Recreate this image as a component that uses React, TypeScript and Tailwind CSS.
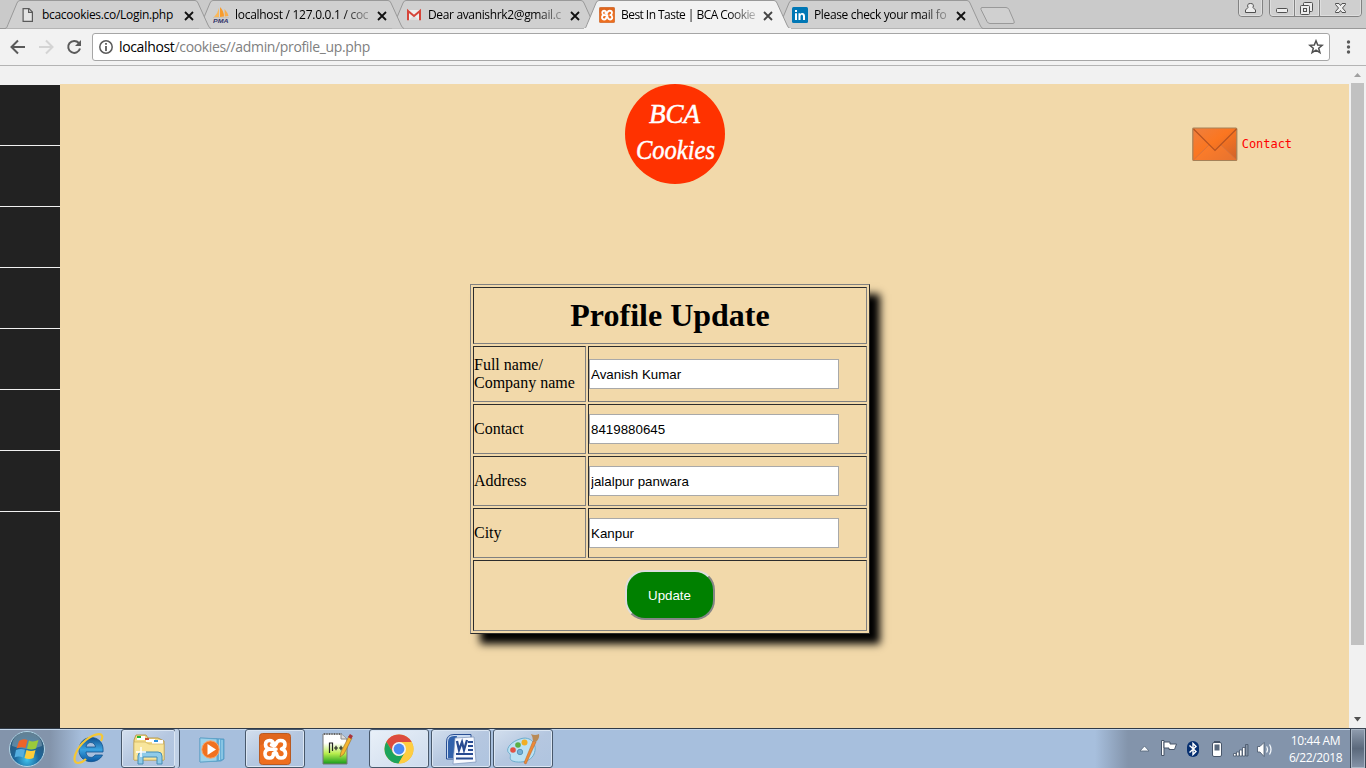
import type { ReactNode } from "react";

function PageIcon() {
  return (
    <svg width="16" height="16" viewBox="0 0 16 16" fill="#e4e4e4" stroke="#5a5a5a" strokeWidth="1.2">
      <path d="M3.100 1.6 H9 L12.4 5 V14.4 H3.100 Z" />
      <path d="M8.6 1.8 V5.4 H12.2" fill="none" />
    </svg>
  );
}

function PmaIcon() {
  return (
    <svg width="16" height="16" viewBox="0 0 16 16">
      <path d="M6 1 Q5 6 1 10 L6 10 Z" fill="#f9b85c" />
      <path d="M7 0 Q11 4 11 9.5 L7 10 Z" fill="#f89c2c" />
      <path d="M11.5 2 Q15 6 15.5 9 L11.8 9.6 Z" fill="#f9ad4a" />
      <path d="M0 10.6 H16" stroke="#c9b9a0" strokeWidth=".6" />
      <text x="0" y="15.8" fontFamily="Liberation Sans" fontSize="5.6" fontWeight="bold" fontStyle="italic" fill="#34366b" textLength="15.5" lengthAdjust="spacingAndGlyphs">PMA</text>
    </svg>
  );
}

function GmailIcon() {
  return (
    <svg width="16" height="16" viewBox="0 0 16 16">
      <path d="M1 3 H15 V13 H1 Z" fill="#eeeeee" />
      <path d="M3 13 L8 8.5 L13 13" fill="#dddddd" />
      <path d="M2 13.2 V4 L8 9 L14 4 V13.2" fill="none" stroke="#d6453a" strokeWidth="2" />
    </svg>
  );
}

function XamppIcon({ size }: { size: number }) {
  return (
    <svg width={size} height={size} viewBox="0 0 32 32">
      <rect x=".5" y=".5" width="31" height="31" rx="3" fill="#ee6e1e" stroke="#b85a22" />
      <path d="M1 1 H31 V10 Q16 7 1 12 Z" fill="#b9501c" opacity=".25" />
      <g fill="none" stroke="#fff" strokeWidth="3.600" strokeLinecap="round" strokeLinejoin="round">
        <path d="M12.500 12 Q15.500 13.500 17 11 Q18 7.500 21.500 7.500 Q26 7.500 26 11.500 Q26 15 22.500 16 Q26.500 17 26.500 20.500 Q26.500 25 22 25 Q18 25 17.500 20.500 Q16.500 18.500 14.500 20.500 Q14.500 25 10.500 25 Q6 25 6 20.500 Q6 17 10 16.300 H17" />
        <path d="M10 16 Q6.500 15 6.500 11.500 Q6.500 7.500 10.500 7.500 Q14 7.500 15 11.500" />
      </g>
    </svg>
  );
}

function LinkedInIcon() {
  return (
    <svg width="16" height="16" viewBox="0 0 16 16">
      <rect width="16" height="16" rx="1.5" fill="#0077b5" />
      <path d="M3 6.200 H5 V13 H3 Z M3 3 H5 V5 H3 Z M6.500 6.200 H8.400 V7.300 C9 5.700 13 5.200 13 9.200 V13 H11 V9.600 C11 7 8.500 7.300 8.500 9.600 V13 H6.500 Z" fill="#fff" />
    </svg>
  );
}

const tabs: { title: string; icon: ReactNode; active?: boolean; z: string; fade: boolean; track: string }[] = [
  { title: "bcacookies.co/Login.php", icon: <PageIcon />, z: "z-[5]", fade: false, track: "tracking-[-0.3px]" },
  { title: "localhost / 127.0.0.1 / coc", icon: <PmaIcon />, z: "z-[4]", fade: true, track: "tracking-[-0.28px]" },
  { title: "Dear avanishrk2@gmail.c", icon: <GmailIcon />, z: "z-[3]", fade: true, track: "tracking-[-0.35px]" },
  { title: "Best In Taste | BCA Cookie", icon: <XamppIcon size={16} />, active: true, z: "z-[6]", fade: true, track: "tracking-[-0.55px]" },
  { title: "Please check your mail fo", icon: <LinkedInIcon />, z: "z-[2]", fade: true, track: "tracking-[-0.35px]" },
];

function TabStrip() {
  return (
    <div className="relative flex h-[29px] shrink-0 border-b border-[#999] bg-[#cacaca] pl-[5px]">
      {tabs.map((t) => (
        <div key={t.title} className={`relative h-[29px] w-[193px] shrink-0 ${t.z}`}>
          <svg className="absolute left-0 top-0" width="208" height="29" viewBox="0 0 208 29">
            <path d="M0 28.5 C2 28 2 27 3 24.500 L12 3 Q13 .5 15 .5 H190 Q192 .5 193 3 L203 25 Q204.500 28.500 206 28.500" fill={t.active ? "#f2f2f2" : "#d0d0d0"} stroke="#999" />
            {t.active && <path d="M0 28.500 H207" stroke="#f2f2f2" />}
          </svg>
          <div className="relative flex h-[29px] items-center pl-[15px]">
            <span className="mt-px w-[22px] shrink-0">{t.icon}</span>
            <span className={`w-[134px] whitespace-nowrap text-[12px] leading-[18px] text-black ${t.track} ${t.fade ? "[mask-image:linear-gradient(to_right,black_108px,transparent_142px)]" : ""}`}>{t.title}</span>
            <svg className="ml-[8px] mt-[2px]" width="10" height="10" viewBox="0 0 10 10">
              <path d="M1 1 L9 9 M9 1 L1 9" stroke={t.active ? "#444" : "#111"} strokeWidth="1.800" />
            </svg>
          </div>
        </div>
      ))}
      <svg className="ml-[9px]" width="38" height="28" viewBox="0 0 38 28">
        <path d="M3 7.500 H27 Q29 7.500 30 9.500 L35 21 Q36 23.500 34 23.500 H11 Q9 23.500 8 21.500 L2 9.500 Q1.500 7.500 3 7.500 Z" fill="#d0d0d0" stroke="#999" />
      </svg>
      <svg className="ml-auto mr-[3px]" width="126" height="18" viewBox="0 0 126 18">
        <g fill="#cfcfcf" stroke="#828282">
          <path d="M1.500 -1 V13 Q1.500 16.500 5 16.500 H22 Q25.500 16.500 25.500 13 V-1" />
          <path d="M32.500 -1 V13 Q32.500 16.500 36 16.500 H121 Q124.500 16.500 124.500 13 V-1" />
          <path d="M57.500 0 V16 M82.500 0 V16" />
        </g>
        <g fill="none" stroke="#dedede">
          <path d="M2.500 0 V13 Q2.500 15.500 5 15.500 H22 Q24.500 15.500 24.500 13 V0 M33.500 0 V13 Q33.500 15.500 36 15.500 H56.500 V0 M58.500 0 V15.500 H81.500 V0 M83.500 0 V15.500 H121 Q123.500 15.500 123.500 13 V0" />
        </g>
        <g fill="#ededed" stroke="#505050">
          <path d="M11 7.500 Q9.500 3.500 13.500 3.500 Q17.500 3.500 16 7.500 L18.500 10 V12.500 H8.500 V10 Z" />
          <rect x="39.500" y="8.500" width="11" height="4" rx="1" />
          <rect x="66.500" y="2.500" width="9" height="9" rx="1" />
          <rect x="63.500" y="5.500" width="9" height="9" rx="1" />
          <rect x="66.500" y="8.500" width="3" height="3" />
          <path d="M98.500 3.500 H102 L103.500 5.500 L105 3.500 H108.500 V4.500 L105.500 8 L108.500 11.500 V12.500 H105 L103.500 10.500 L102 12.500 H98.500 V11.500 L101.500 8 L98.500 4.500 Z" />
        </g>
      </svg>
    </div>
  );
}

function Toolbar() {
  return (
    <div className="flex h-[37px] shrink-0 items-center border-b border-[#b4b4b4] bg-[#f2f2f2]">
      <svg width="92" height="36" viewBox="0 0 92 36" fill="none" strokeWidth="2">
        <path d="M25 18 H12 M18 11.500 L11.500 18 L18 24.500" stroke="#5a5a5a" />
        <path d="M39 18 H52 M46 11.500 L52.500 18 L46 24.500" stroke="#d4d4d4" />
        <path d="M78.800 14 A6 6 0 1 0 80 19.500" stroke="#5a5a5a" />
        <path d="M81 11 V17 H75 Z" fill="#5a5a5a" />
      </svg>
      <div className="flex h-[28px] w-[1238px] items-center rounded-[3px] border border-[#a6a6a6] bg-white">
        <svg className="ml-[6px] mr-[6px] shrink-0" width="14" height="14" viewBox="0 0 14 14">
          <circle cx="7" cy="7" r="6.200" fill="none" stroke="#5a5a5a" strokeWidth="1.500" />
          <path d="M7 3 V4.800 M7 6 V11" stroke="#5a5a5a" strokeWidth="1.800" />
        </svg>
        <span className="whitespace-nowrap text-[14px] leading-[20px] tracking-[-0.35px] text-[#808080]">
          <span className="text-black">localhost</span>/cookies//admin/profile_up.php
        </span>
        <svg className="ml-auto mr-[5px] shrink-0" width="16" height="16" viewBox="0 0 16 16">
          <path d="M8 1.800 L9.700 6 L14.200 6.300 L10.700 9.200 L11.900 13.700 L8 11.200 L4.100 13.700 L5.300 9.200 L1.800 6.300 L6.300 6 Z" fill="none" stroke="#505050" strokeWidth="1.500" />
        </svg>
      </div>
      <svg className="ml-[16px]" width="5" height="14" viewBox="0 0 5 14" fill="#5a5a5a">
        <circle cx="2.500" cy="2" r="1.700" />
        <circle cx="2.500" cy="7" r="1.700" />
        <circle cx="2.500" cy="12" r="1.700" />
      </svg>
    </div>
  );
}

function Envelope() {
  return (
    <svg width="46" height="35" viewBox="0 0 46 35">
      <defs>
        <linearGradient id="env" x1="0" y1="0" x2="1" y2="1">
          <stop offset="0" stopColor="#ee8040" />
          <stop offset=".45" stopColor="#fb7620" />
          <stop offset="1" stopColor="#cf622b" />
        </linearGradient>
      </defs>
      <rect x=".8" y="1" width="44" height="32.500" rx="1" fill="url(#env)" stroke="#a58158" strokeWidth="1.200" />
      <path d="M1.500 33 L17 18 L23 23.500 L29 18 L44.500 33 Z" fill="#fb8234" opacity=".5" />
      <path d="M1.500 33 L17 18 M44.500 33 L29 18" stroke="#d9743c" strokeWidth="1" />
      <path d="M1.500 2 L23 23.500 L44.500 2" fill="none" stroke="#b65320" strokeWidth="1.200" />
    </svg>
  );
}

const cell = "flex items-center border border-b-[#808080] border-l-[#2c2c2c] border-r-[#808080] border-t-[#2c2c2c]";

const fields = [
  { label: "Full name/ Company name", value: "Avanish Kumar" },
  { label: "Contact", value: "8419880645" },
  { label: "Address", value: "jalalpur panwara" },
  { label: "City", value: "Kanpur" },
];

function ProfileForm() {
  return (
    <div className="mt-[100px] grid h-[350px] w-[400px] shrink-0 grid-cols-[113px_279px] grid-rows-[57px_56px_50px_50px_50px_71px] gap-[2px] border border-b-[#2c2c2c] border-l-[#808080] border-r-[#2c2c2c] border-t-[#808080] bg-[#f2d9aa] p-[2px] font-['Liberation_Serif',serif] text-[16px] leading-[18px] text-black shadow-[10px_10px_8px_#000]">
      <div className={`${cell} col-span-2 justify-center`}>
        <h1 className="pl-px text-[32px] font-bold leading-[37px]">Profile Update</h1>
      </div>
      {fields.map((f) => (
        <div key={f.label} className="contents">
          <label className={`${cell} pl-[0.5px]`}>{f.label}</label>
          <div className={cell}>
            <input defaultValue={f.value} className="h-[30px] w-[250px] border border-[#a9a9a9] bg-white px-[1.5px] font-['Liberation_Sans',sans-serif] text-[13.333px] text-black" />
          </div>
        </div>
      ))}
      <div className={`${cell} col-span-2 justify-center`}>
        <button className="-mt-px h-[50px] w-[90px] rounded-[20px] border-2 border-b-[#868686] border-l-[#dddddd] border-r-[#868686] border-t-[#dddddd] bg-[#008000] pt-px font-['Liberation_Sans',sans-serif] text-[13.333px] text-white">
          Update
        </button>
      </div>
    </div>
  );
}

function Page() {
  return (
    <div className="flex min-h-0 flex-1 bg-[#f1f1f1]">
      <div className="mt-[18px] flex flex-1 bg-[#f2d9aa]">
        <nav className="w-[60px] shrink-0 border-t border-[#f1f1f1] bg-[#222]">
          {[0, 1, 2, 3, 4, 5, 6].map((i) => (
            <div key={i} className="h-[61px] border-b border-[#f1f1f1]" />
          ))}
        </nav>
        <main className="grid flex-1 grid-cols-[1fr_400px_1fr]">
          <div />
          <div className="-ml-[35px] flex flex-col">
            <svg className="ml-[155px] shrink-0" width="100" height="100" viewBox="0 0 100 100">
              <circle cx="50" cy="50" r="50" fill="#ff3200" />
              <g fill="#fff" stroke="#fff" strokeWidth=".5" fontFamily="Liberation Serif, serif" fontStyle="italic">
                <text x="24" y="39" fontSize="27" textLength="51" lengthAdjust="spacingAndGlyphs">BCA</text>
                <text x="11" y="75" fontSize="28" textLength="79" lengthAdjust="spacingAndGlyphs">Cookies</text>
              </g>
            </svg>
            <ProfileForm />
          </div>
          <a className="mr-[57px] mt-[42px] flex h-[36px] items-center justify-end gap-[4px] font-['DejaVu_Sans_Mono',monospace] text-[12px] tracking-[-0.05px] text-[#f00]">
            <Envelope />
            Contact
          </a>
        </main>
      </div>
      <div className="flex w-[17px] shrink-0 flex-col items-center bg-[#f1f1f1]">
        <svg className="h-[17px] shrink-0" width="17" height="17"><path d="M5 11 L8.500 7 L12 11 Z" fill="#a0a0a0" /></svg>
        <div className="h-[562px] w-[13px] bg-[#c1c1c1]" />
        <svg className="mt-auto" width="17" height="17"><path d="M5 6 L8.500 10.500 L12 6 Z" fill="#505050" /></svg>
      </div>
    </div>
  );
}

function Orb() {
  return (
    <svg width="38" height="38" viewBox="0 0 38 38">
      <defs>
        <radialGradient id="orb" cx=".5" cy=".8" r=".75">
          <stop offset="0" stopColor="#41c4ee" />
          <stop offset=".45" stopColor="#1c679d" />
          <stop offset="1" stopColor="#33566f" />
        </radialGradient>
      </defs>
      <circle cx="19" cy="19" r="17.500" fill="url(#orb)" stroke="#b2d5e6" strokeWidth="1" />
      <path d="M4 16 A15 14 0 0 1 34 16 Q19 22 4 16" fill="#d2e4ec" opacity=".3" />
      <path d="M11 11 Q15 8 19.500 10 L17.500 18 Q13 16.500 8.500 18.500 Z" fill="#ed6428" />
      <path d="M21 10.500 Q25 12.500 30.500 10 L28 18.500 Q23 20.500 19 18.500 Z" fill="#9aca3a" />
      <path d="M8 20 Q13 18 17 19.800 L15 27.500 Q11 25.500 6.500 27.500 Z" fill="#54aee0" />
      <path d="M18.500 20 Q23 22 27.500 20 L25.500 28 Q21 30 16.500 28 Z" fill="#fdcd3b" />
    </svg>
  );
}

function IeIcon() {
  return (
    <svg width="34" height="34" viewBox="0 0 34 34">
      <defs><linearGradient id="ie" x1="0" y1="0" x2="0" y2="1"><stop offset="0" stopColor="#11508f" /><stop offset=".5" stopColor="#3ba3e0" /><stop offset="1" stopColor="#0957a2" /></linearGradient></defs>
      <path d="M31 20 H14 C14 26 21 27 23 23 H30.500 C26 33 7 32 7 18 C7 1 33 1 31 20 Z M14 15 H23.500 C23 9 14.500 9 14 15 Z" fill="url(#ie)" fillRule="evenodd" stroke="#12528e" strokeWidth=".8" />
      <path d="M29 9 C34 -1 23 1 14 8 C3 17 -1 31 6 31 C9 31 12 29 14 27" fill="none" stroke="#f5c735" strokeWidth="2.200" />
    </svg>
  );
}

function FolderIcon() {
  return (
    <svg width="34" height="34" viewBox="0 0 34 34">
      <path d="M2 8 L4 3 H14 L16 6 H26 L32 9 V28 H2 Z" fill="#f4dc87" stroke="#b89a4e" />
      <path d="M5 4 H13 V8 H5 Z M14 7 H23 V10 H14 Z M20 8 H31 V12 H20 Z" fill="#fff" />
      <path d="M5 4 H9 V6 H5 Z" fill="#20b632" /><path d="M13 6 H17 V8 H13 Z" fill="#d04b31" /><path d="M22 8 H26 V10 H22 Z" fill="#2c91dc" />
      <path d="M2 10 H13 L17 12 H32 V28 H2 Z" fill="#f8e59b" stroke="#cfb15f" strokeWidth=".7" />
      <path d="M6 32 V24 Q6 20 10 20 H26 Q30 20 30 24 V32 H25 V25 H11 V32 Z" fill="#8fcbe9" stroke="#458cb4" />
      <path d="M9 15 V25 M4 20 H14" stroke="#fff" strokeWidth="1.500" />
    </svg>
  );
}

function PlayerIcon() {
  return (
    <svg width="32" height="32" viewBox="0 0 32 32">
      <path d="M3 5 L27 6 V26 L24 28 L3 29 Z" fill="#67aed6" stroke="#4892bd" strokeWidth=".7" />
      <path d="M3 5 L20 6 V28 L3 29 Z" fill="#9ed2ea" stroke="#579fc4" strokeWidth=".7" />
      <path d="M22.500 6.500 V27 M25 7 V26" stroke="#a9dcf1" />
      <circle cx="13.500" cy="16.500" r="8.700" fill="#f1711f" stroke="#f7a76d" />
      <path d="M10.500 11 L19 16.500 L10.500 22 Z" fill="#fff" />
    </svg>
  );
}

function NotepadIcon() {
  return (
    <svg width="32" height="34" viewBox="0 0 32 34">
      <defs><linearGradient id="np" x1="0" y1="0" x2="0" y2="1"><stop offset=".3" stopColor="#fff" /><stop offset=".65" stopColor="#b8ed4e" /><stop offset="1" stopColor="#149b1b" /></linearGradient></defs>
      <path d="M2 2 H20 L26 7 V32 H2 Z" fill="url(#np)" stroke="#777" />
      <path d="M3 2 H21" stroke="#666" strokeWidth="2" strokeDasharray="1 1.500" />
      <path d="M20 2 V7 H26" fill="#ddd" stroke="#888" />
      <path d="M8.500 21 V11 H11.500 V19 M13 16 H17 M15 13.800 V18.200 M18 16 H22 M20 13.800 V18.200" fill="none" stroke="#222" strokeWidth="1.200" />
      <path d="M19 25 L20 20 L28 4 L31 6 L23 22 Z" fill="#f5b630" stroke="#926b26" strokeWidth=".6" />
      <path d="M27 5 L29 2 L32 4 L30 7 Z" fill="#a9333a" />
    </svg>
  );
}

function ChromeIcon() {
  return (
    <svg width="30" height="30" viewBox="0 0 30 30">
      <circle cx="15" cy="15" r="14.500" fill="#e5b932" />
      <path d="M2.400 7.800 A14.500 14.500 0 0 1 27.600 8 H15 L9 18.500 Z" fill="#dc4b3e" />
      <path d="M2.400 7.800 L9 18.500 Q11 22 15 22 L20.500 19 L14.500 29.500 A14.500 14.500 0 0 1 2.400 7.800" fill="#1ca45c" />
      <path d="M27.600 8 A14.500 14.500 0 0 1 14.500 29.500 L21 18.500 Q22.500 12 15 8 Z" fill="#ffcd41" />
      <circle cx="15" cy="15" r="7" fill="#f4f4f4" />
      <circle cx="15" cy="15" r="5.400" fill="#4a8af4" />
    </svg>
  );
}

function WordIcon() {
  return (
    <svg width="32" height="32" viewBox="0 0 32 32">
      <path d="M1.500 26 V9 Q1.500 1.500 9 1.500 H26 V26 Z" fill="#cbdcf2" stroke="#294f94" />
      <path d="M3 25 V9 Q3 3 9 3 H12 L8 25 Z" fill="#3262ab" />
      <path d="M10 5 L29 4 L31 29 L8 31 Z" fill="#f8faff" stroke="#7890b8" strokeWidth=".7" />
      <path d="M12 8 L14 17 L17 9 L19 17 L22 7" fill="none" stroke="#294b91" strokeWidth="2.300" />
      <path d="M23 9 H28 M23 13 H28 M23 17 H28 M11 21 H28 M11 25.500 H28" stroke="#274a90" strokeWidth="2" />
    </svg>
  );
}

function PaintIcon() {
  return (
    <svg width="34" height="32" viewBox="0 0 34 32">
      <path d="M14 6 C25 2 32 12 28 21 C24 31 8 30 5 27 C3 25 6 22 3 20 C-1 17 4 9 14 6 Z" fill="#bce1f3" stroke="#6badcd" />
      <circle cx="7" cy="17" r="2.800" fill="#e25244" /><circle cx="12" cy="12" r="2.800" fill="#5aaf45" /><circle cx="18.500" cy="9.500" r="3" fill="#f1ae23" />
      <circle cx="14" cy="19" r="2.700" fill="#72afd5" stroke="#5a95b8" />
      <path d="M18 30 L27 8 L30 9 L20 31 Z" fill="#ed8937" stroke="#b96524" strokeWidth=".5" />
      <path d="M25 1 Q29 3 33 1 Q34 5 30 9 L27 8 Q27 4 25 1" fill="#b98a57" />
    </svg>
  );
}

const slots: { name: string; icon: ReactNode; open?: boolean; stacked?: boolean }[] = [
  { name: "ie", icon: <IeIcon /> },
  { name: "explorer", icon: <FolderIcon />, open: true, stacked: true },
  { name: "player", icon: <PlayerIcon /> },
  { name: "xampp", icon: <XamppIcon size={32} />, open: true },
  { name: "notepad", icon: <NotepadIcon /> },
  { name: "chrome", icon: <ChromeIcon />, open: true },
  { name: "word", icon: <WordIcon />, open: true },
  { name: "paint", icon: <PaintIcon />, open: true },
];

function slotClass(name: string, open?: boolean, stacked?: boolean) {
  if (!open) return "w-[60px]";
  const base = "rounded-[3px] border border-[#48586b] shadow-[inset_0_0_0_1px_#dbe6f3]";
  const fill = name === "chrome" ? "bg-linear-to-br from-[#e9f0f8] to-[#cddbed]" : "bg-linear-to-br from-[#d3dfee] via-[#b5c7e0] to-[#afc4df]";
  return `${base} ${fill} ${stacked ? "w-[55px] mr-[5px]" : "w-[60px]"}`;
}

function Taskbar() {
  return (
    <div className="flex h-[40px] shrink-0 border-t border-[#303a47] bg-[linear-gradient(to_right,#8394ab_0px,#8394ab_50px,#a7bfdd_82px,#a7bfdd_1095px,#8394ab_1128px)] shadow-[inset_0_1px_0_#c5d7ea]">
      <div className="flex w-[54px] shrink-0 items-center justify-center"><Orb /></div>
      <div className="ml-[5px] flex gap-[2px]">
        {slots.map((s) => (
          <div key={s.name} className={`relative flex h-[39px] shrink-0 items-center justify-center ${slotClass(s.name, s.open, s.stacked)}`}>
            {s.icon}
            {s.stacked && <span className="absolute -right-[5px] -top-px h-[39px] w-[5px] rounded-r-[3px] border-r border-[#48586b] bg-[#c0d1e6]" />}
          </div>
        ))}
      </div>
      <svg className="ml-auto mr-[11px] mt-[8px]" width="138" height="24" viewBox="0 0 138 24">
        <path d="M2 14 L6.500 9 L11 14 Z" fill="#f6f9fc" stroke="#566678" strokeWidth=".8" />
        <g stroke="#475569" fill="#fff">
          <path d="M23.500 3.500 H26 V18.500 H23.500 Z" />
          <path d="M26 5 H32 V7 H38.500 L36.500 12.500 H31 V11 H26 Z" />
        </g>
        <rect x="49" y="4" width="12" height="16" rx="6" fill="#062f70" />
        <path d="M51.500 8.500 L58 14.500 L55 17.500 V6.500 L58 9.500 L51.500 15.500" fill="none" stroke="#fff" strokeWidth="1.400" />
        <rect x="76.500" y="4.500" width="5" height="3" fill="#fff" stroke="#475569" />
        <rect x="74.500" y="5.500" width="9" height="14" rx="1.500" fill="#fff" stroke="#475569" />
        <rect x="76.500" y="7.500" width="5" height="6" fill="#59697d" />
        <g transform="translate(2 1)">
          <g fill="#fff" stroke="#475569" strokeWidth=".8">
            <path d="M93.500 15.500 H96 V18 H93.500 Z M96.500 14 H99 V18 H96.500 Z M99.500 12 H102 V18 H99.500 Z M102.500 9.500 H105 V18 H102.500 Z" />
            <path d="M105.500 6.500 H108 V18 H105.500 Z" fill="#8492a5" />
            <path d="M117.500 8.500 H120 L124 4.500 V18.500 L120 14 H117.500 Z" />
          </g>
          <path d="M126.500 8.500 Q128.500 11.500 126.500 14.500 M129.500 6.500 Q132.500 11.500 129.500 16.500" fill="none" stroke="#f3f7fb" strokeWidth="1.300" />
        </g>
      </svg>
      <div className="mr-[7px] w-[57px] pt-[3px] text-center text-[12px] leading-[17px] tracking-[-0.4px] text-white">
        <div className="whitespace-nowrap tracking-[-0.3px]">10:44 AM</div>
        <div className="whitespace-nowrap">6/22/2018</div>
      </div>
      <div className="mr-px h-[39px] w-[14px] border border-[#aab7c6] bg-linear-to-b from-[#8e9bad] via-[#5b697c] to-[#8492a6] outline outline-[#3c4654]" />
    </div>
  );
}

export default function App() {
  return (
    <div className="flex h-[768px] w-[1366px] flex-col overflow-hidden font-['Open_Sans',sans-serif]">
      <TabStrip />
      <Toolbar />
      <Page />
      <Taskbar />
    </div>
  );
}
